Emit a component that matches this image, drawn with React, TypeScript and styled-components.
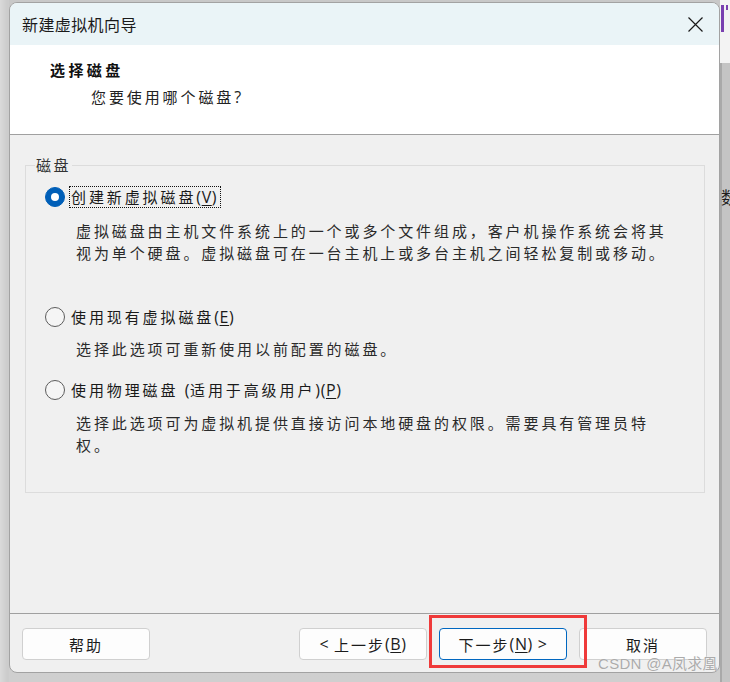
import React from "react";
import styled, { createGlobalStyle } from "styled-components";

const CJK = `"Noto Sans CJK SC", "Noto Sans", sans-serif`;

const GlobalStyle = createGlobalStyle`
  html, body { margin: 0; padding: 0; }
  body { background: #c9c9c9; font-family: ${CJK}; }
  #root { width: 730px; height: 682px; overflow: hidden; }
`;

const Desktop = styled.div`
  position: relative;
  width: 730px;
  height: 682px;
  box-sizing: border-box;
  padding-left: 9px;
  display: flex;
  align-items: stretch;
  background: linear-gradient(to right, #dadada 0px, #cccccc 7px, #c9c9c9 100%);
  overflow: hidden;
`;

const WindowCol = styled.div`
  display: flex;
  flex-direction: column;
  padding-top: 2px;
  background: linear-gradient(to bottom, #c8c8c8 0, #cfcfcf 100%);
`;

const Window = styled.div`
  width: 711px;
  height: 671px;
  box-sizing: border-box;
  border: 1px solid #a2a2a2;
  border-radius: 8px;
  overflow: hidden;
  display: flex;
  flex-direction: column;
  background: #f0f0f0;
`;

const TitleBar = styled.div`
  height: 42px;
  flex: none;
  background: #eaf4f7;
  display: flex;
  align-items: center;
  justify-content: space-between;
  padding: 0 16px 0 12px;
`;

const TitleText = styled.div`
  font-family: ${CJK};
  font-size: 16px;
  letter-spacing: 0.4px;
  color: #1a1a1a;
`;

const CloseIcon = styled.svg`
  width: 15px;
  height: 15px;
  display: block;
`;

const Header = styled.div`
  height: 90px;
  flex: none;
  box-sizing: border-box;
  background: #ffffff;
  border-bottom: 1px solid #a0a0a0;
  padding-top: 14px;
`;

const HeaderTitle = styled.div`
  font-family: ${CJK};
  font-size: 15px;
  font-weight: 700;
  letter-spacing: 3.4px;
  line-height: 22px;
  color: #111;
  padding-left: 40px;
`;

const HeaderSub = styled.div`
  font-family: ${CJK};
  font-size: 15px;
  letter-spacing: 2.9px;
  line-height: 22px;
  color: #222;
  margin-top: 5px;
  padding-left: 81px;
`;

const Body = styled.div`
  flex: 1;
  padding: 19px 14px 0 15px;
`;

const Group = styled.fieldset`
  margin: 0;
  padding: 0;
  border: 1px solid #dcdcdc;
  min-width: 0;
`;

const Legend = styled.legend`
  margin-left: 9px;
  padding: 0 1px;
  font-family: ${CJK};
  font-size: 15px;
  letter-spacing: 2.4px;
  line-height: 22px;
  color: #333;
`;

const GroupContent = styled.div`
  padding: 10px 0 36px 19px;
  display: flex;
  flex-direction: column;
`;

const OptionRow = styled.div<{ $gap: number }>`
  display: flex;
  align-items: center;
  gap: 4px;
  height: 22px;
  margin-top: ${(p) => p.$gap}px;
`;

const Radio = styled.span<{ $checked?: boolean }>`
  width: 20px;
  height: 20px;
  flex: none;
  box-sizing: border-box;
  border-radius: 50%;
  display: flex;
  align-items: center;
  justify-content: center;
  background: ${(p) => (p.$checked ? "#005fb8" : "#f5f5f5")};
  border: 1px solid ${(p) => (p.$checked ? "#005fb8" : "#5c5c5c")};
  &::after {
    content: "";
    display: ${(p) => (p.$checked ? "block" : "none")};
    width: 8px;
    height: 8px;
    border-radius: 50%;
    background: #ffffff;
  }
`;

const OptionLabel = styled.span<{ $focused?: boolean }>`
  font-family: ${CJK};
  font-size: 15px;
  letter-spacing: 2.9px;
  line-height: 20px;
  color: #1a1a1a;
  padding: 0 3px 0 1px;
  border: 1px dotted ${(p) => (p.$focused ? "#111" : "transparent")};
  white-space: nowrap;
`;

const Desc = styled.div<{ $gap: number }>`
  margin-top: ${(p) => p.$gap}px;
  margin-left: 31px;
  font-family: ${CJK};
  font-size: 15px;
  letter-spacing: 2.9px;
  line-height: 22px;
  color: #2a2a2a;
  white-space: nowrap;
`;

const Latin = styled.span`
  font-family: "Open Sans", "Noto Sans", sans-serif;
  font-size: 16px;
  letter-spacing: 0.6px;
`;

const Key = styled.u`
  text-underline-offset: 2px;
`;

const Footer = styled.div`
  height: 59px;
  flex: none;
  box-sizing: border-box;
  border-top: 1px solid #a0a0a0;
  padding: 14px 12px 0;
  display: flex;
  gap: 12px;
`;

const Spacer = styled.div`
  flex: 1;
`;

const ButtonWrap = styled.div`
  position: relative;
`;

const Button = styled.button<{ $primary?: boolean }>`
  width: 128px;
  height: 32px;
  box-sizing: border-box;
  background: #fdfdfd;
  border: 1px solid ${(p) => (p.$primary ? "#0067c0" : "#d0d0d0")};
  border-radius: 4px;
  font-family: ${CJK};
  font-size: 15px;
  letter-spacing: 2px;
  color: #1b1b1b;
  padding: 0;
  display: flex;
  align-items: center;
  justify-content: center;
  white-space: pre;
`;

const Highlight = styled.div`
  position: absolute;
  left: -10px;
  top: -13px;
  width: 158px;
  height: 53px;
  box-sizing: border-box;
  border: 3px solid #ef3a3a;
  pointer-events: none;
`;

const RightBackdrop = styled.div`
  position: relative;
  flex: 1;
  display: flex;
  flex-direction: column;
  overflow: hidden;
`;

const BackdropTop = styled.div`
  height: 63px;
  flex: none;
  background: #f3f3f3;
  position: relative;
`;

const PurpleMark = styled.div<{ $left: number; $w: number; $h: number }>`
  position: absolute;
  top: 5px;
  left: ${(p) => p.$left}px;
  width: ${(p) => p.$w}px;
  height: ${(p) => p.$h}px;
  background: #7a3fb0;
`;

const BackdropRest = styled.div`
  flex: 1;
  position: relative;
  background: #c4c4c4;
  border-left: 2px solid #a9a9a9;
`;

const PeekChar = styled.span`
  position: absolute;
  left: -1px;
  top: 124px;
  font-family: ${CJK};
  font-size: 17px;
  line-height: 20px;
  color: #1e1e1e;
`;

const Watermark = styled.div`
  position: absolute;
  left: 598px;
  top: 654px;
  font-family: "Liberation Sans", ${CJK};
  font-size: 15px;
  line-height: 20px;
  letter-spacing: 0.3px;
  color: #ababab;
  text-shadow: 0 0 1px rgba(255, 255, 255, 0.9);
  white-space: nowrap;
  pointer-events: none;
`;

export default function App() {
  return (
    <>
      <GlobalStyle />
      <Desktop>
        <WindowCol>
          <Window>
            <TitleBar>
              <TitleText>新建虚拟机向导</TitleText>
              <CloseIcon viewBox="0 0 15 15">
                <path d="M0.5 0.5 L14.5 14.5 M14.5 0.5 L0.5 14.5" stroke="#1a1a1a" strokeWidth="1.2" fill="none" />
              </CloseIcon>
            </TitleBar>
            <Header>
              <HeaderTitle>选择磁盘</HeaderTitle>
              <HeaderSub>
                您要使用哪个磁盘<Latin>?</Latin>
              </HeaderSub>
            </Header>
            <Body>
              <Group>
                <Legend>磁盘</Legend>
                <GroupContent>
                  <OptionRow $gap={0}>
                    <Radio $checked />
                    <OptionLabel $focused>
                      创建新虚拟磁盘<Latin>(<Key>V</Key>)</Latin>
                    </OptionLabel>
                  </OptionRow>
                  <Desc $gap={12}>
                    虚拟磁盘由主机文件系统上的一个或多个文件组成，客户机操作系统会将其
                    <br />
                    视为单个硬盘。虚拟磁盘可在一台主机上或多台主机之间轻松复制或移动。
                  </Desc>
                  <OptionRow $gap={42}>
                    <Radio />
                    <OptionLabel>
                      使用现有虚拟磁盘<Latin>(<Key>E</Key>)</Latin>
                    </OptionLabel>
                  </OptionRow>
                  <Desc $gap={10}>选择此选项可重新使用以前配置的磁盘。</Desc>
                  <OptionRow $gap={19}>
                    <Radio />
                    <OptionLabel>
                      使用物理磁盘 <Latin>(</Latin>适用于高级用户<Latin>)(<Key>P</Key>)</Latin>
                    </OptionLabel>
                  </OptionRow>
                  <Desc $gap={11}>
                    选择此选项可为虚拟机提供直接访问本地硬盘的权限。需要具有管理员特
                    <br />
                    权。
                  </Desc>
                </GroupContent>
              </Group>
            </Body>
            <Footer>
              <Button>帮助</Button>
              <Spacer />
              <Button>
                <Latin>&lt; </Latin>上一步<Latin>(<Key>B</Key>)</Latin>
              </Button>
              <ButtonWrap>
                <Button $primary>
                  下一步<Latin>(<Key>N</Key>) &gt;</Latin>
                </Button>
                <Highlight />
              </ButtonWrap>
              <Button>取消</Button>
            </Footer>
          </Window>
        </WindowCol>
        <RightBackdrop>
          <BackdropTop>
            <PurpleMark $left={1} $w={3} $h={27} />
            <PurpleMark $left={6} $w={2} $h={5} />
          </BackdropTop>
          <BackdropRest>
            <PeekChar>数</PeekChar>
          </BackdropRest>
        </RightBackdrop>
        <Watermark>CSDN @A凤求凰</Watermark>
      </Desktop>
    </>
  );
}
